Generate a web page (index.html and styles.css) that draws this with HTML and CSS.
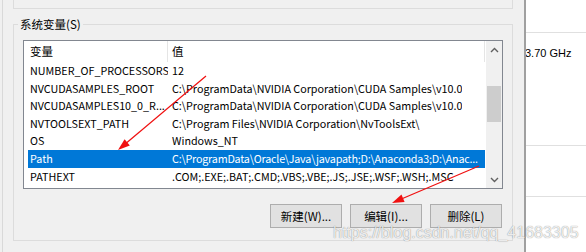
FILE: index.html
```html
<!DOCTYPE html>
<html lang="zh-CN">
<head>
    <meta charset="UTF-8">
    <title>系统变量</title>
    <link rel="stylesheet" href="styles.css">
</head>
<body>
    <div class="screen">
        <div class="dialog">
            <div class="upper-group"></div>

            <div class="group">
                <div class="group-title">系统变量(S)</div>

                <div class="list">
                    <div class="list-body">
                        <div class="row head">
                            <span class="col-name">变量</span>
                            <span class="col-value">值</span>
                        </div>
                        <div class="row">
                            <span class="col-name">NUMBER_OF_PROCESSORS</span>
                            <span class="col-value">12</span>
                        </div>
                        <div class="row">
                            <span class="col-name">NVCUDASAMPLES_ROOT</span>
                            <span class="col-value">C:\ProgramData\NVIDIA Corporation\CUDA Samples\v10.0</span>
                        </div>
                        <div class="row">
                            <span class="col-name">NVCUDASAMPLES10_0_R...</span>
                            <span class="col-value">C:\ProgramData\NVIDIA Corporation\CUDA Samples\v10.0</span>
                        </div>
                        <div class="row">
                            <span class="col-name">NVTOOLSEXT_PATH</span>
                            <span class="col-value">C:\Program Files\NVIDIA Corporation\NvToolsExt\</span>
                        </div>
                        <div class="row">
                            <span class="col-name">OS</span>
                            <span class="col-value">Windows_NT</span>
                        </div>
                        <div class="row selected">
                            <span class="col-name">Path</span>
                            <span class="col-value tight">C:\ProgramData\Oracle\Java\javapath;D:\Anaconda3;D:\Anac...</span>
                        </div>
                        <div class="row">
                            <span class="col-name">PATHEXT</span>
                            <span class="col-value">.COM;.EXE;.BAT;.CMD;.VBS;.VBE;.JS;.JSE;.WSF;.WSH;.MSC</span>
                        </div>
                    </div>

                    <!-- 滚动条 -->
                    <div class="scrollbar">
                        <div class="sb-btn">
                            <svg width="9" height="6" viewBox="0 0 9 6"><polyline points="1,5 4.5,1.5 8,5" /></svg>
                        </div>
                        <div class="sb-track"><div class="sb-thumb"></div></div>
                        <div class="sb-btn">
                            <svg width="9" height="6" viewBox="0 0 9 6"><polyline points="1,1 4.5,4.5 8,1" /></svg>
                        </div>
                    </div>
                </div>

                <div class="buttons">
                    <button>新建(W)...</button>
                    <button>编辑(I)...</button>
                    <button>删除(L)</button>
                </div>
            </div>
        </div>

        <div class="side">
            <div class="side-row r1"></div>
            <div class="side-row r2">3.70 GHz</div>
            <div class="side-row r3"></div>
        </div>

        <!-- 红色箭头标注 -->
        <svg class="arrows" width="586" height="252" viewBox="0 0 586 252">
            <line x1="206" y1="76" x2="124" y2="145" />
            <polygon points="118,150 129.8,145.4 124.6,139.2" />
            <line x1="479" y1="166" x2="399" y2="200" />
            <polygon points="392,203 404.6,202 401.5,194.6" />
        </svg>

        <div class="watermark">https://blog.csdn.net/qq_41683305</div>
    </div>
</body>
</html>
```

FILE: styles.css
```css
/* 整体画面 */
body {
    margin: 0;
    background-color: #f0f0f0;
    font-family: "Noto Sans CJK SC", "Microsoft YaHei", sans-serif;
    font-size: 11.5px;
    color: #000;
}

.screen {
    position: relative;
    width: 586px;
    height: 252px;
    overflow: hidden;
    display: flex;
}

/* 对话框 */
.dialog {
    box-sizing: border-box;
    width: 524px;
    margin-left: 2px;
    border-left: 1px solid #d9d9d9;
    border-right: 2px solid #a0a0a0;
    background-color: #f0f0f0;
    flex-shrink: 0;
}

.upper-group {
    box-sizing: border-box;
    width: 500px;
    height: 9px;
    margin-left: 10px;
    border: 1px solid #dcdcdc;
    border-top: none;
}

.group {
    box-sizing: border-box;
    width: 500px;
    height: 217px;
    margin: 15px 0 0 10px;
    padding: 0 9px;
    border: 1px solid #dcdcdc;
}

.group-title {
    width: max-content;
    height: 16px;
    line-height: 16px;
    margin: -9px 0 0 -5px;
    padding: 0 2px;
    background-color: #f0f0f0;
}

/* 列表 */
.list {
    box-sizing: border-box;
    height: 149px;
    margin-top: 8px;
    border: 1px solid #828790;
    background-color: #fff;
    display: flex;
    overflow: hidden;
}

.list-body {
    flex: 1;
    overflow: hidden;
}

.row {
    display: flex;
    height: 17.6px;
    line-height: 17.6px;
    margin-left: 4px;
    white-space: nowrap;
    font-size: 10.75px;
}

.row.head {
    height: 21px;
    line-height: 20px;
    font-size: 11.5px;
    border-right: 1px solid #e5e5e5;
}

.col-name {
    box-sizing: border-box;
    width: 140px;
    padding-left: 2px;
    overflow: hidden;
    flex-shrink: 0;
}

.head .col-name {
    border-right: 1px solid #e5e5e5;
}

.col-value {
    padding-left: 4px;
    overflow: hidden;
}

.col-value.tight {
    letter-spacing: -0.2px;
}

.row.selected {
    background-color: #0078d7;
    color: #fff;
}

.scrollbar {
    width: 16px;
    margin-left: 1px;
    background-color: #f0f0f0;
    display: flex;
    flex-direction: column;
}

.sb-btn {
    height: 17px;
    display: flex;
    align-items: center;
    justify-content: center;
}

.sb-btn polyline {
    fill: none;
    stroke: #606060;
    stroke-width: 1.4;
}

.sb-track {
    flex: 1;
    padding: 28px 1px 0 1px;
}

.sb-thumb {
    height: 36px;
    background-color: #cdcdcd;
}

/* 按钮 */
.buttons {
    display: flex;
    justify-content: flex-end;
    gap: 8px;
    margin-top: 15px;
    padding-right: 1px;
}

.buttons button {
    box-sizing: border-box;
    width: 72px;
    height: 24px;
    padding: 0;
    border: 1px solid #adadad;
    background-color: #e1e1e1;
    font-family: inherit;
    font-size: 11.5px;
    color: #000;
}

/* 右侧背景窗口 */
.side {
    flex: 1;
    background-color: #fff;
    overflow: hidden;
}

.side-row {
    box-sizing: border-box;
    border-bottom: 1px solid #e0e0e0;
    white-space: nowrap;
    font-family: "Liberation Sans", Arial, sans-serif;
    font-size: 11px;
}

.side-row.r1 { height: 33px; }
.side-row.r2 { height: 113px; padding-top: 14px; margin-left: -1px; }
.side-row.r3 { height: 51px; }

/* 标注 */
.arrows {
    position: absolute;
    left: 0;
    top: 0;
}

.arrows line {
    stroke: #f01010;
    stroke-width: 1.2;
}

.arrows polygon {
    fill: #f01010;
}

.watermark {
    position: absolute;
    left: 333px;
    top: 224px;
    font-family: "Liberation Sans", Arial, sans-serif;
    font-size: 16px;
    color: rgba(255, 255, 255, 0.85);
    text-shadow: 0 0 1px rgba(0, 0, 0, 0.35), 0 0 1px rgba(0, 0, 0, 0.2);
    white-space: nowrap;
}
```
